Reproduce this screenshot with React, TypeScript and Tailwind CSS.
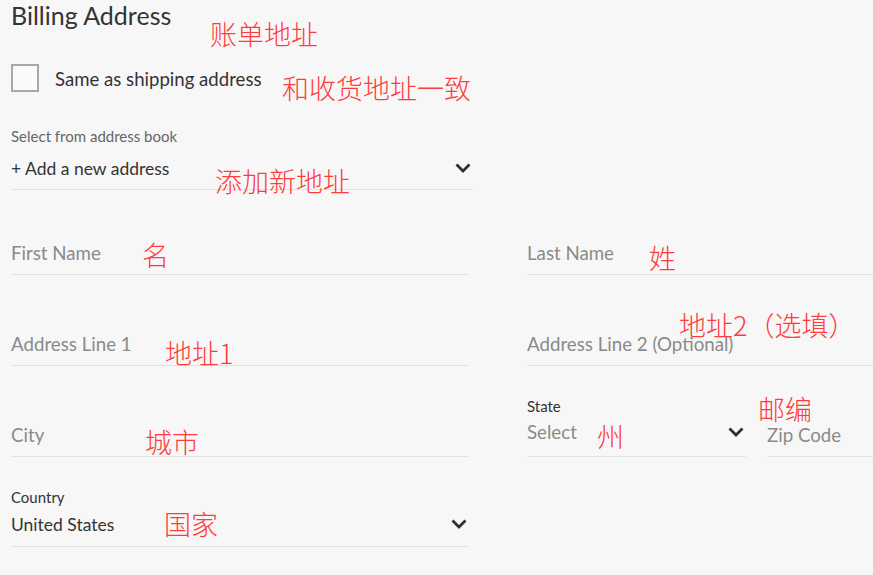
import type { ReactNode } from "react";

const lato = { fontFamily: "Lato, 'Liberation Sans', sans-serif" };

function Chevron() {
  return (
    <svg width="16" height="10" viewBox="0 0 16 10" className="shrink-0 text-[#2f2f2f]">
      <polyline points="1.5,1.5 8,8 14.5,1.5" fill="none" stroke="currentColor" strokeWidth="2.8" />
    </svg>
  );
}

function TextField({ placeholder }: { placeholder: string }) {
  return (
    <div className="border-b border-[#e2e2e2] pb-[10px] text-[18.7px] leading-[22px] text-[#8a8a8a]">
      {placeholder}
    </div>
  );
}

function SelectField({
  label,
  value,
  muted,
  pb = "pb-[12px]",
}: {
  label: string;
  value: string;
  muted?: boolean;
  pb?: string;
}) {
  return (
    <div className="flex flex-col">
      <div className="text-[15px] leading-[17px] text-[#333]">{label}</div>
      <div
        className={`mt-[6px] flex items-center justify-between border-b border-[#e2e2e2] pr-[2px] ${pb} leading-[22px] ${
          muted ? "text-[18.7px] text-[#8a8a8a]" : "text-[17.5px] text-[#333]"
        }`}
      >
        <span className={muted ? "" : "pt-[2px]"}>{value}</span>
        <Chevron />
      </div>
    </div>
  );
}

function Note({ className, children }: { className: string; children: ReactNode }) {
  return (
    <div
      className={`absolute whitespace-nowrap text-[27px] leading-[27px] font-light text-[#ff3b3b] ${className}`}
      style={{ fontFamily: "'Noto Sans CJK SC', sans-serif" }}
    >
      {children}
    </div>
  );
}

export default function App() {
  return (
    <div className="relative h-[575px] w-[873px] overflow-hidden bg-[#f7f7f7] pl-[11px]" style={lato}>
      <h1 className="text-[25px] leading-[30px] text-[#333]">Billing Address</h1>

      <label className="mt-[34px] flex items-center gap-[16px]">
        <span className="h-[28px] w-[28px] border-2 border-[#a8a8a8] bg-[#fafafa]" />
        <span className="pt-[2px] text-[18.6px] leading-[22px] text-[#333]">Same as shipping address</span>
      </label>

      <div className="mt-[36px] w-[462px]">
        <div className="text-[15px] leading-[17px] text-[#666]">Select from address book</div>
        <div className="mt-[11px] flex items-center justify-between border-b border-[#e2e2e2] pb-[9px] pr-[2px] text-[17.5px] leading-[22px] text-[#333]">
          <span className="pt-[2px]">+ Add a new address</span>
          <Chevron />
        </div>
      </div>

      <div className="grid grid-cols-[458px_458px] gap-x-[58px]">
        <div className="mt-[52px]">
          <TextField placeholder="First Name" />
        </div>
        <div className="mt-[52px]">
          <TextField placeholder="Last Name" />
        </div>

        <div className="mt-[58px]">
          <TextField placeholder="Address Line 1" />
        </div>
        <div className="mt-[58px]">
          <TextField placeholder="Address Line 2 (Optional)" />
        </div>

        <div className="mt-[58px] self-end">
          <TextField placeholder="City" />
        </div>
        <div className="flex items-end gap-[21px]">
          <div className="w-[219px]">
            <SelectField label="State" value="Select" muted pb="pb-[13px]" />
          </div>
          <div className="flex-1">
            <TextField placeholder="Zip Code" />
          </div>
        </div>

        <div className="mt-[32px]">
          <SelectField label="Country" value="United States" pb="pb-[10px]" />
        </div>
      </div>

      <Note className="left-[210px] top-[20px]">账单地址</Note>
      <Note className="left-[282px] top-[74px]">和收货地址一致</Note>
      <Note className="left-[215px] top-[167px]">添加新地址</Note>
      <Note className="left-[142px] top-[241px]">名</Note>
      <Note className="left-[649px] top-[244px]">姓</Note>
      <Note className="left-[679px] top-[311px]">地址2（选填）</Note>
      <Note className="left-[165px] top-[339px]">地址1</Note>
      <Note className="left-[145px] top-[428px]">城市</Note>
      <Note className="left-[758px] top-[395px]">邮编</Note>
      <Note className="left-[597px] top-[422px]">州</Note>
      <Note className="left-[164px] top-[510px]">国家</Note>
    </div>
  );
}
